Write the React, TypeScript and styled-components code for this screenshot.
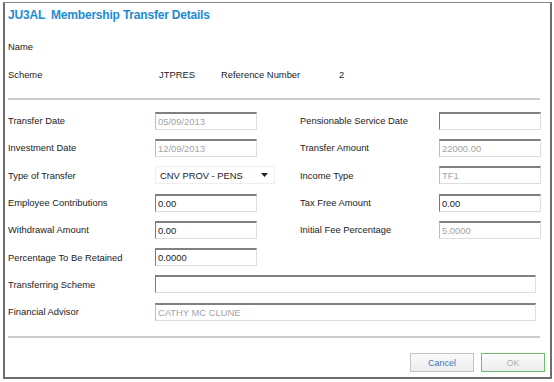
import React from 'react';
import styled, { createGlobalStyle } from 'styled-components';

const GlobalStyle = createGlobalStyle`
  body {
    margin: 0;
    background: #fff;
    font-family: "Liberation Sans", Arial, sans-serif;
  }
`;

const Dialog = styled.div`
  box-sizing: border-box;
  width: 549px;
  height: 377px;
  margin: 2px 0 0 3px;
  padding: 0 10px 0 3px;
  border: 2px solid #6e6e6e;
  border-top: 1px solid #8a8a8a;
  display: flex;
  flex-direction: column;
  color: #222;
  font-size: 9.4px;
`;

const Title = styled.div`
  margin-top: 5px;
  line-height: 14px;
  font-weight: bold;
  font-size: 12px;
  letter-spacing: -0.2px;
  color: #1d8ccf;
  white-space: pre;
`;

const InfoRow = styled.div`
  height: 28px;
  display: flex;
  align-items: center;
`;

const InfoCell = styled.span<{ $w: number }>`
  width: ${p => p.$w}px;
  flex-shrink: 0;
`;

const Divider = styled.div<{ $top: number }>`
  height: 2px;
  margin-top: ${p => p.$top}px;
  background: #cbcbcb;
`;

const FormGrid = styled.div`
  margin-top: 7px;
  display: grid;
  grid-template-columns: 147px 145px 139px 102px;
  grid-auto-rows: 27.3px;
  align-items: center;
`;

const Label = styled.span``;

const Field = styled.input<{ $muted?: boolean; $wide?: boolean }>`
  box-sizing: border-box;
  width: ${p => (p.$wide ? '381px' : '102px')};
  height: 18px;
  padding: 0 2px;
  margin: 0;
  border: 1px solid #dedede;
  border-top: 2px solid #808080;
  border-left: 1px solid ${p => (p.$muted ? '#bdbdbd' : '#7a7a7a')};
  background: #fff;
  font-family: "Liberation Sans", Arial, sans-serif;
  font-size: 9.4px;
  color: ${p => (p.$muted ? '#a4a4a4' : '#222')};
  outline: none;
  ${p => p.$wide && 'grid-column: 2 / span 3;'}
`;

const Select = styled.div`
  box-sizing: border-box;
  width: 120px;
  height: 18px;
  padding: 0 6px 0 4px;
  border: 1px solid #efefef;
  display: flex;
  align-items: center;
  justify-content: space-between;
  font-size: 9.4px;
  color: #222;
`;

const Buttons = styled.div`
  margin: 15px -5px 0 0;
  display: flex;
  justify-content: flex-end;
  gap: 7px;
`;

const Button = styled.button<{ $primary?: boolean }>`
  box-sizing: border-box;
  width: 64px;
  height: 19px;
  padding: 0;
  border: 1px solid ${p => (p.$primary ? '#6cbd6c' : '#c4c4c4')};
  background: linear-gradient(#fbfbfb, #ececec);
  font-family: "Liberation Sans", Arial, sans-serif;
  font-size: 9px;
  color: ${p => (p.$primary ? '#b0b0b0' : '#3a76b8')};
`;

const rows: Array<[string, string, boolean, string, string, boolean]> = [
  ['Transfer Date', '05/09/2013', true, 'Pensionable Service Date', '', false],
  ['Investment Date', '12/09/2013', true, 'Transfer Amount', '22000.00', true],
  ['Type of Transfer', 'SELECT', false, 'Income Type', 'TF1', true],
  ['Employee Contributions', '0.00', false, 'Tax Free Amount', '0.00', false],
  ['Withdrawal Amount', '0.00', false, 'Initial Fee Percentage', '5.0000', true],
];

const App = () => {
  return (
    <>
      <GlobalStyle />
      <Dialog>
        <Title>{'JU3AL  Membership Transfer Details'}</Title>

        <InfoRow style={{ marginTop: 10 }}>
          <InfoCell $w={151}>Name</InfoCell>
        </InfoRow>
        <InfoRow>
          <InfoCell $w={151}>Scheme</InfoCell>
          <InfoCell $w={62}>JTPRES</InfoCell>
          <InfoCell $w={118}>Reference Number</InfoCell>
          <InfoCell $w={20}>2</InfoCell>
        </InfoRow>

        <Divider $top={10} />

        <FormGrid>
          {rows.map(([l, v, m, rl, rv, rm]) => (
            <React.Fragment key={l}>
              <Label>{l}</Label>
              {v === 'SELECT' ? (
                <Select>
                  <span>CNV PROV - PENS</span>
                  <svg width="7" height="4" viewBox="0 0 7 4">
                    <path d="M0 0 L7 0 L3.5 4 Z" fill="#222" />
                  </svg>
                </Select>
              ) : (
                <Field readOnly value={v} $muted={m} />
              )}
              <Label>{rl}</Label>
              <Field readOnly value={rv} $muted={rm} />
            </React.Fragment>
          ))}
          <Label>Percentage To Be Retained</Label>
          <Field readOnly value="0.0000" />
          <Label />
          <Label />
          <Label>Transferring Scheme</Label>
          <Field readOnly value="" $wide />
          <Label>Financial Advisor</Label>
          <Field readOnly value="CATHY MC CLUNE" $muted $wide />
        </FormGrid>

        <Divider $top={11} />

        <Buttons>
          <Button>Cancel</Button>
          <Button $primary>OK</Button>
        </Buttons>
      </Dialog>
    </>
  );
};

export default App;
